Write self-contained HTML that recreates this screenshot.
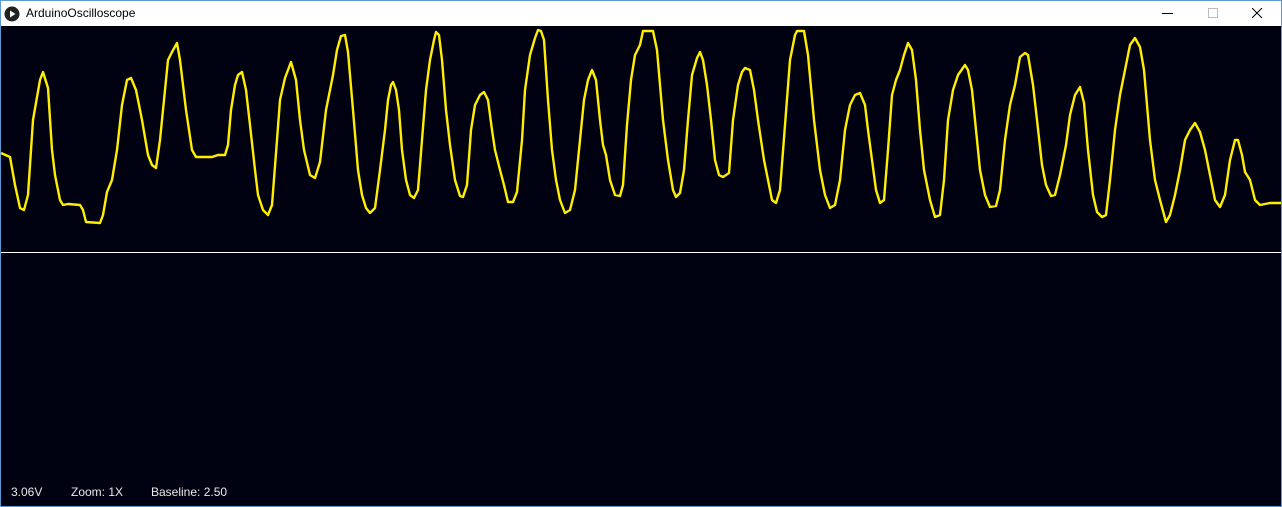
<!DOCTYPE html>
<html><head><style>
html,body{margin:0;padding:0;width:1282px;height:507px;overflow:hidden;background:#fff}
.win{position:absolute;left:0;top:0;width:1280px;height:505px;border:1px solid #5b9bd5;background:#fff}
.title{position:absolute;left:0;top:0;width:1280px;height:25px;background:#fff;font:12px "Liberation Sans",sans-serif;color:#000}
.canvas{position:absolute;left:0;top:25px;width:1280px;height:480px;background:#000212}
.txt{position:absolute;top:485px;font:12px "Liberation Sans",sans-serif;color:#e8e8e8}
</style></head><body>
<div class="win">
 <div class="title">
  <svg style="position:absolute;left:3px;top:5px" width="16" height="16"><circle cx="8" cy="8" r="7.5" fill="#222"/><path d="M6 4.5 L11.5 8 L6 11.5Z" fill="#fff"/></svg>
  <span style="position:absolute;left:25px;top:5px">ArduinoOscilloscope</span>
  <div style="position:absolute;left:1161px;top:12px;width:11px;height:1px;background:#000"></div>
  <div style="position:absolute;left:1207px;top:7px;width:8px;height:8px;border:1px solid #bbb"></div>
  <svg style="position:absolute;left:1251px;top:7px" width="11" height="11"><path d="M0 0L10 10M10 0L0 10" stroke="#000" stroke-width="1"/></svg>
 </div>
 <div class="canvas"></div>
</div>
<svg style="position:absolute;left:0;top:0" width="1282" height="507">
<line x1="1" y1="252.5" x2="1281" y2="252.5" stroke="#fff" stroke-width="1"/>
<polyline fill="none" stroke="#ffee00" stroke-width="2.4" stroke-linejoin="round" points="1,153 10,157 15,185 20,208 24,210 28,195 33,120 40,80 43,72 48,88 52,150 55,175 60,200 63,205 68,204 80,205 83,210 86,222 100,223 103,215 107,192 112,180 117,150 122,105 127,80 131,78 136,90 142,120 148,155 152,165 156,168 160,140 163,110 168,60 172,52 177,43 180,60 186,110 192,150 196,157 212,157 218,155 225,155 228,145 231,110 235,85 238,75 242,72 246,90 250,125 255,170 258,195 263,210 268,215 272,205 277,140 280,100 285,78 291,62 296,80 300,120 304,150 310,175 315,178 320,162 326,110 333,75 337,50 341,36 345,35 348,52 353,110 358,170 362,195 366,208 370,213 375,208 380,170 385,130 388,100 391,85 393,82 396,90 399,110 402,150 406,180 410,195 414,198 418,190 422,140 426,90 430,60 434,40 436,32 439,35 442,60 446,110 450,145 455,180 460,196 463,197 467,185 471,130 475,105 480,95 484,92 488,100 492,130 495,150 500,170 504,185 508,202 513,202 517,192 522,140 525,90 530,55 535,38 538,30 541,31 544,40 548,100 552,150 556,180 560,200 565,213 570,210 575,190 580,140 584,100 588,80 592,70 596,80 600,120 603,145 606,155 610,180 615,195 620,196 623,185 627,125 631,80 635,55 640,45 643,31 653,31 657,50 663,120 668,160 673,190 676,197 680,193 684,170 688,120 692,75 697,58 700,52 703,60 707,85 711,120 715,160 719,175 723,177 729,173 733,120 738,85 742,72 745,68 750,70 754,90 758,120 764,160 768,180 772,200 776,203 780,190 785,125 790,60 795,35 797,31 804,31 808,55 814,120 820,170 825,195 830,208 835,205 840,180 845,130 850,105 855,95 860,93 865,105 868,130 872,160 876,190 880,203 884,200 888,150 892,95 896,80 900,70 904,55 908,43 912,50 916,80 920,130 924,170 930,200 935,217 940,215 944,180 948,120 953,90 958,75 965,65 968,70 972,90 976,130 980,170 985,195 990,207 996,206 1000,190 1005,140 1010,105 1015,85 1020,57 1025,53 1028,55 1033,85 1037,120 1042,165 1046,185 1051,196 1055,195 1060,175 1066,145 1070,115 1075,95 1080,87 1084,103 1088,150 1093,195 1097,212 1102,217 1106,215 1110,180 1115,130 1120,95 1125,70 1130,45 1135,38 1140,47 1144,70 1150,140 1155,180 1160,200 1166,222 1170,215 1175,195 1180,170 1185,140 1190,130 1195,123 1200,132 1205,150 1210,175 1215,200 1220,207 1225,195 1230,160 1235,140 1238,140 1242,155 1245,172 1250,180 1255,200 1260,205 1270,203 1281,203"/>
</svg>
<div class="txt" style="left:11px">3.06V</div>
<div class="txt" style="left:71px">Zoom: 1X</div>
<div class="txt" style="left:151px">Baseline: 2.50</div>
</body></html>
